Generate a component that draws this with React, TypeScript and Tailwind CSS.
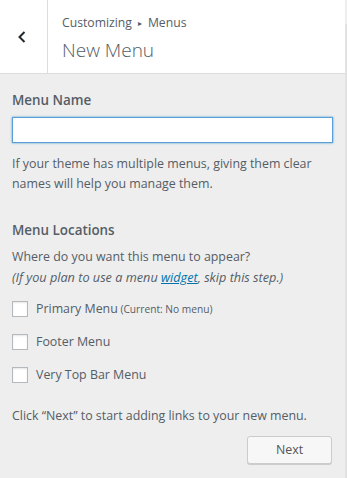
import React from 'react';

const font = { fontFamily: '"Open Sans", "Noto Sans", Arial, sans-serif' };

function Check({ label, note }: { label: string; note?: string }) {
  return (
    <label className="flex h-[16px] items-center gap-[8px]">
      <span className="h-[16px] w-[16px] shrink-0 border border-[#b4b9be] bg-white shadow-[inset_0_1px_2px_rgba(0,0,0,0.1)]" />
      <span className="text-[12.4px] leading-none text-[#555d66]">
        {label}
        {note && <span className="text-[10.2px]"> {note}</span>}
      </span>
    </label>
  );
}

export default function App() {
  return (
    <div className="flex h-[478px] w-[347px] bg-[#eeeeee]" style={font}>
      <div className="flex w-[345px] flex-col">
        <header className="flex h-[74px] border-b border-[#dddddd] bg-white">
          <button className="flex w-[48px] items-center justify-center border-r border-[#dddddd] pr-[3px] text-[#23282d]">
            <svg width="12" height="14" viewBox="0 0 12 14" fill="none">
              <path d="M8.5 2 L3.5 7 L8.5 12" stroke="currentColor" strokeWidth="2" />
            </svg>
          </button>
          <div className="flex flex-col pl-[14px] pt-[14px]">
            <div className="text-[12.2px] leading-[18px] text-[#555d66]">
              Customizing<span className="relative top-[-1px] mx-[6px] text-[8px]">▸</span>Menus
            </div>
            <div className="mt-[5px] text-[19px] font-light leading-[24px] text-[#555d66]">New Menu</div>
          </div>
        </header>

        <main className="flex flex-col px-[12px] pt-[17px]">
          <div className="text-[13.4px] font-semibold leading-[18px] text-[#555d66]">Menu Name</div>
          <div className="mt-[8px] h-[26px] w-[321px] border border-[#5b9dd9] bg-white shadow-[0_0_2px_rgba(30,140,190,0.8)]" />
          <p className="mt-[11px] text-[12.4px] leading-[19.5px] text-[#555d66]">
            If your theme has multiple menus, giving them clear names will help you manage them.
          </p>

          <div className="mt-[28px] text-[13.4px] font-semibold leading-[18px] text-[#555d66]">Menu Locations</div>
          <p className="mt-[8px] text-[12.4px] leading-[20px] text-[#555d66]">
            Where do you want this menu to appear?
            <br />
            <em className="text-[12.7px]">
              (If you plan to use a menu{' '}
              <a className="text-[#0073aa] underline">widget</a>, skip this step.)
            </em>
          </p>

          <div className="mt-[13px] flex flex-col gap-[17px]">
            <Check label="Primary Menu" note="(Current: No menu)" />
            <Check label="Footer Menu" />
            <Check label="Very Top Bar Menu" />
          </div>

          <p className="mt-[24px] text-[12.4px] leading-[18px] text-[#555d66]">
            Click “Next” to start adding links to your new menu.
          </p>

          <div className="mt-[11px] flex justify-end pr-[1px]">
            <button className="h-[28px] w-[85px] rounded-[3px] border border-[#cccccc] bg-[#f7f7f7] text-[12.4px] text-[#555555] shadow-[0_1px_0_#cccccc]">
              Next
            </button>
          </div>
        </main>
      </div>
      <div className="mt-[24px] w-[2px] bg-[#e2e2e2]" />
    </div>
  );
}
